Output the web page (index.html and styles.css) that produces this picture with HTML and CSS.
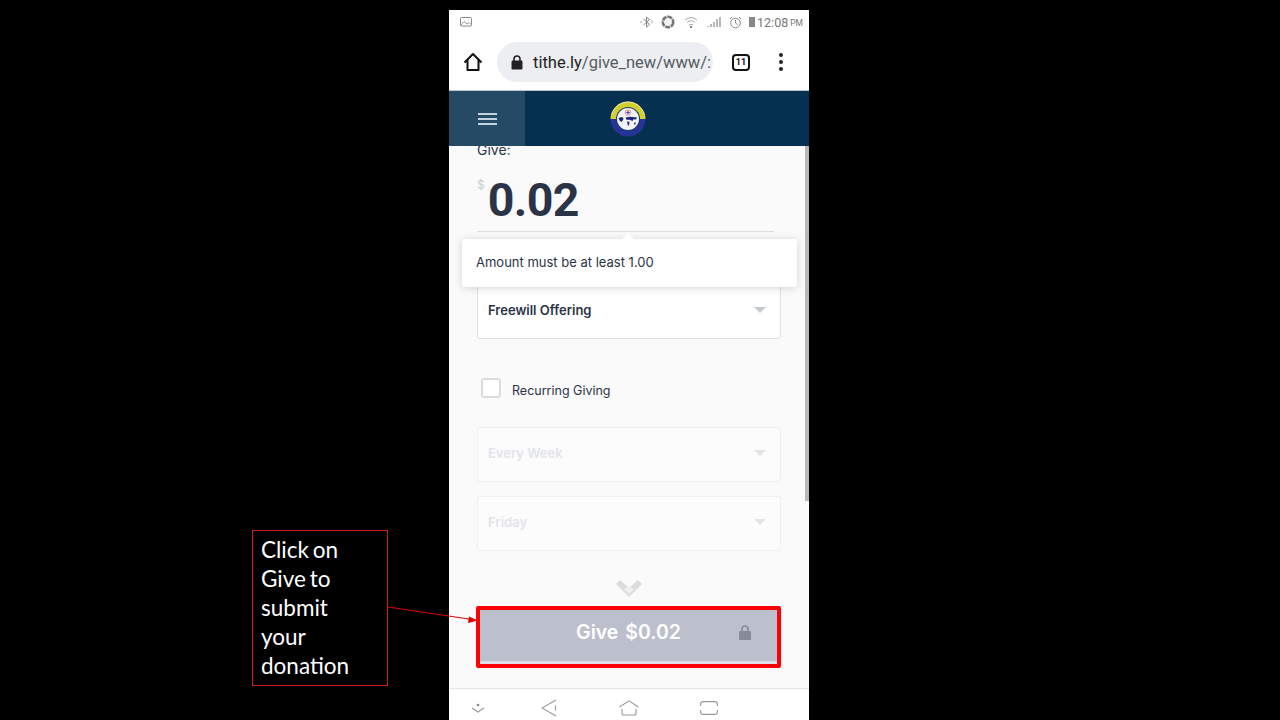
FILE: index.html
```html
<!DOCTYPE html>
<html lang="en">

<head>
  <meta charset="UTF-8">
  <meta name="viewport" content="width=device-width, initial-scale=1.0">
  <title>Give</title>
  <link rel="stylesheet" href="styles.css">
</head>

<body>
  <div class="slide">
    <div class="callout">Click on<br>Give to<br>submit<br>your<br>donation</div>
    <svg class="arrow" width="100" height="24" viewBox="0 0 100 24">
      <path d="M0 3 L84 15.5" stroke="#e00000" stroke-width="1" fill="none" />
      <path d="M90 16.5 L81 12.5 L80 19 Z" fill="#e00000" />
    </svg>

    <div class="phone">
      <div class="status-bar">
        <svg class="status-pic" width="12" height="10" viewBox="0 0 12 10">
          <rect x="0.5" y="0.5" width="11" height="8.5" rx="1" fill="none" stroke="#888" />
          <path d="M1 8 L4 4.5 L7 7 L9 5.5 L11 7.5" fill="none" stroke="#999" />
        </svg>
        <div class="status-right">
          <svg width="13" height="12" viewBox="0 0 13 12">
            <path d="M3.5 3 L9.5 8.5 L6.5 11 V1 L9.5 3.5 L3.5 9" fill="none" stroke="#888" />
            <path d="M1 5 V7 M12 4.5 V7.5" stroke="#aaa" />
          </svg>
          <svg class="gap-10" width="14" height="14" viewBox="0 0 14 14">
            <circle cx="7" cy="7" r="5.2" fill="none" stroke="#777" stroke-width="2.6" stroke-dasharray="5 0.8" />
            <circle cx="7" cy="7" r="3" fill="#f2f2f2" />
          </svg>
          <svg class="gap-11" width="14" height="14" viewBox="0 0 14 14">
            <path d="M1 5 Q7 0 13 5 M3 7.5 Q7 4 11 7.5 M5 10 Q7 8.5 9 10" fill="none" stroke="#aaa" />
            <rect x="6" y="11" width="2" height="2" fill="#888" />
          </svg>
          <svg class="gap-11" width="14" height="12" viewBox="0 0 14 12">
            <path d="M1 10 V11 M4 8 V11 M7 6 V11 M10 3 V11 M13 1 V11" stroke="#888" stroke-width="1.2" />
          </svg>
          <svg class="gap-10" width="13" height="13" viewBox="0 0 13 13">
            <circle cx="6.5" cy="7" r="4.8" fill="none" stroke="#888" />
            <path d="M6.5 4 V7 L8.5 8.5 M1 3 L3 1 M12 3 L10 1" fill="none" stroke="#888" />
          </svg>
          <span class="battery"></span>
          <span class="clock">12:08</span>
          <span class="ampm">PM</span>
        </div>
      </div>

      <div class="toolbar">
        <svg class="home-icon" width="20" height="20" viewBox="0 0 20 20">
          <path d="M1.5 10.5 L10 2 L18.5 10.5 M4.5 8 V18 H15.5 V8" fill="none" stroke="#111" stroke-width="2" stroke-linejoin="round" />
        </svg>
        <div class="url-box">
          <svg width="12" height="15" viewBox="0 0 12 15">
            <path d="M3 6 V4 A3 3 0 0 1 9 4 V6" fill="none" stroke="#222" stroke-width="1.6" />
            <rect x="0.5" y="5.5" width="11" height="9" rx="1.2" fill="#222" />
          </svg>
          <span class="url"><span class="url-host">tithe.ly</span>/give_new/www/:</span>
        </div>
        <span class="tab-count">11</span>
        <span class="menu-dots"><i></i><i></i><i></i></span>
      </div>

      <div class="app-header">
        <div class="burger"><i></i><i></i><i></i></div>
        <div class="logo-wrap">
          <svg width="36" height="37" viewBox="0 0 36 37">
            <circle cx="18" cy="19" r="17.5" fill="#26349a" />
            <path d="M0.5 19 A17.5 17.5 0 0 1 35.5 19 H29 A11 11 0 0 0 7 19 Z" fill="#d2ce2c" />
            <path d="M1.5 15 A17 17 0 0 1 34.5 15" fill="none" stroke="#e8e8d8" stroke-width="0.8" />
            <circle cx="18" cy="19" r="12" fill="#173a63" />
            <circle cx="18" cy="19" r="11" fill="#f2f3f8" />
            <circle cx="18" cy="12.5" r="2.8" fill="#f6dfe2" stroke="#c4505e" stroke-width="0.5" />
            <path d="M18 10.6 V14.4 M16.2 12.5 H19.8" stroke="#26349a" stroke-width="0.8" />
            <path d="M8.5 18 L11.5 17 L13.5 18 L13 20 L11.5 22 L9.5 20.5 Z M15.5 17.5 L20 16.8 L27 17.5 L26 19.5 L23.5 19.2 L22.5 21 L19.5 19.8 L16.5 19.8 Z M17 21.5 L19.5 21.8 L19 25.5 L17.8 25.2 Z M24 22.5 L26 22.8 L25.2 24.5 L24 24.2 Z" fill="#1c2877" />
          </svg>
        </div>
      </div>

      <div class="content">
        <div class="form">
          <div class="give-label">Give:</div>
          <div class="amount-row">
            <span class="currency">$</span>
            <span class="amount">0.02</span>
          </div>

          <div class="select select-first">
            <span>Freewill Offering</span>
            <i class="caret"></i>
          </div>

          <label class="recurring">
            <span class="checkbox"></span>
            <span>Recurring Giving</span>
          </label>

          <div class="select select-off">
            <span>Every Week</span>
            <i class="caret"></i>
          </div>
          <div class="select select-off select-next">
            <span>Friday</span>
            <i class="caret"></i>
          </div>

          <svg class="more" width="26" height="18" viewBox="0 0 26 18">
            <path d="M0 4 L4 0 L13 8 L22 0 L26 4 L13 17 Z" fill="#dcdcdc" />
            <path d="M8 9 L13 6 L18 9 L13 14 Z" fill="#efefef" />
          </svg>

          <button class="give-btn">
            <span>Give $0.02</span>
            <svg class="btn-lock" width="12" height="15" viewBox="0 0 12 15">
              <path d="M3 6.5 V4 A3 3 0 0 1 9 4 V6.5" fill="none" stroke="#878b99" stroke-width="1.6" />
              <rect y="6" width="12" height="9" rx="1.2" fill="#878b99" />
            </svg>
          </button>
        </div>

        <div class="tooltip">Amount must be at least 1.00</div>
        <div class="scrollbar"></div>
      </div>

      <div class="nav-bar">
        <svg width="16" height="12" viewBox="0 0 16 12">
          <circle cx="8" cy="3" r="1.3" fill="#888" />
          <path d="M2 6 L8 10 L14 6" fill="none" stroke="#999" stroke-width="1.1" />
        </svg>
        <svg width="16" height="18" viewBox="0 0 16 18">
          <path d="M15 1 L1 9 L15 17 M14.5 6.5 V11.5" fill="none" stroke="#999" stroke-width="1.1" />
        </svg>
        <svg width="20" height="16" viewBox="0 0 20 16">
          <path d="M0.5 7 L10 0.8 L19.5 7 M3 9 V13 Q3 15 5 15 H15 Q17 15 17 13 V9" fill="none" stroke="#999" stroke-width="1.1" />
        </svg>
        <svg width="18" height="14" viewBox="0 0 18 14">
          <path d="M0.6 5 V3 Q0.6 0.6 3 0.6 H15 Q17.4 0.6 17.4 3 V5 M0.6 9 V11 Q0.6 13.4 3 13.4 H15 Q17.4 13.4 17.4 11 V9" fill="none" stroke="#999" stroke-width="1.1" />
        </svg>
      </div>
    </div>
  </div>
</body>

</html>
```

FILE: styles.css
```css
* {
  box-sizing: border-box;
}

html,
body {
  margin: 0;
  padding: 0;
  background-color: #000;
}

body {
  font-family: Inter, Arial, sans-serif;
  color: #2b3447;
}

.slide {
  position: relative;
  width: 1280px;
  height: 720px;
  overflow: hidden;
  padding: 10px 0 0 449px;
}

/* annotation drawn on top of the screenshot */
.callout {
  position: absolute;
  left: 252px;
  top: 530px;
  width: 136px;
  height: 156px;
  border: 1px solid #d01c1c;
  padding: 4px 8px;
  font-family: Lato, sans-serif;
  font-size: 22.5px;
  line-height: 29px;
  word-spacing: -2px;
  color: #fff;
}

.arrow {
  position: absolute;
  left: 388px;
  top: 604px;
  z-index: 5;
}

.phone {
  width: 360px;
  height: 710px;
  background: #fff;
  display: flex;
  flex-direction: column;
}

/* status bar */
.status-bar {
  height: 26px;
  display: flex;
  align-items: center;
  justify-content: space-between;
  padding: 0 6px 2px 11px;
  flex-shrink: 0;
}

.status-right {
  display: flex;
  align-items: center;
}

.gap-10 {
  margin-left: 8px;
}

.gap-11 {
  margin-left: 9px;
}

.battery {
  width: 6px;
  height: 10px;
  margin-left: 7px;
  background: #888;
}

.clock {
  font-family: Roboto, sans-serif;
  font-size: 12.5px;
  color: #777;
  margin-left: 2px;
}

.ampm {
  font-family: Roboto, sans-serif;
  font-size: 8.5px;
  color: #777;
  margin: 2px 0 0 2px;
}

/* browser toolbar */
.toolbar {
  height: 55px;
  display: flex;
  align-items: center;
  padding: 0 0 2px 14px;
  border-bottom: 1px solid #b9c3c9;
  flex-shrink: 0;
}

.url-box {
  width: 216px;
  height: 40px;
  margin-left: 14px;
  padding-left: 14px;
  border-radius: 20px;
  background: #eceef1;
  display: flex;
  align-items: center;
  gap: 10px;
  overflow: hidden;
}

.url {
  font-family: Roboto, sans-serif;
  font-size: 16.5px;
  color: #555b63;
  white-space: nowrap;
}

.url-host {
  color: #222;
}

.tab-count {
  width: 18px;
  height: 17px;
  margin-left: 19px;
  border: 2px solid #111;
  border-radius: 4px;
  font-family: Roboto, sans-serif;
  font-size: 9px;
  font-weight: 700;
  line-height: 13px;
  text-align: center;
  color: #111;
}

.menu-dots {
  display: flex;
  flex-direction: column;
  gap: 3px;
  margin-left: 29px;
}

.menu-dots i {
  width: 4px;
  height: 4px;
  border-radius: 50%;
  background: #222;
}

/* site header */
.app-header {
  height: 55px;
  background: #06304f;
  display: flex;
  flex-shrink: 0;
}

.burger {
  width: 76px;
  background: #244a66;
  display: flex;
  flex-direction: column;
  align-items: center;
  justify-content: center;
  gap: 3px;
}

.burger i {
  width: 19px;
  height: 2px;
  background: #c3d2dc;
}

.logo-wrap {
  width: 206px;
  padding-bottom: 1px;
  display: flex;
  align-items: center;
  justify-content: center;
}

/* form area */
.content {
  position: relative;
  flex: 1;
  background: #fafafa;
  overflow: hidden;
}

.form {
  padding: 0 28px;
}

.give-label {
  margin-top: -5px;
  font-size: 14px;
  line-height: 18px;
}

.amount-row {
  height: 73px;
  width: 297px;
  display: flex;
  border-bottom: 1px solid #dcdde0;
}

.currency {
  margin-top: 19px;
  font-size: 12px;
  line-height: 14px;
  color: #c9cbd0;
}

.amount {
  margin: 16px 0 0 3px;
  font-family: Roboto, sans-serif;
  font-size: 46.5px;
  font-weight: 700;
  line-height: 50px;
  letter-spacing: -0.6px;
}

.select {
  width: 304px;
  height: 55px;
  padding: 0 14px 3px 10px;
  background: #fff;
  border: 1px solid #dfe0e3;
  border-radius: 3px;
  display: flex;
  align-items: center;
  justify-content: space-between;
  font-size: 13px;
  font-weight: 600;
}

.select-first {
  margin-top: 52px;
}

.select-off {
  background: #fcfcfc;
  border-color: #f0f0f2;
  color: #e2e4e9;
}

.select-next {
  margin-top: 14px;
}

.caret {
  width: 0;
  height: 0;
  border-left: 6px solid transparent;
  border-right: 6px solid transparent;
  border-top: 6px solid #c4cacd;
}

.select-off .caret {
  border-top-color: #e2e4e8;
}

.recurring {
  height: 88px;
  padding: 39px 0 0 4px;
  display: flex;
  gap: 11px;
  font-size: 12.5px;
}

.recurring span:last-child {
  margin-top: 5px;
}

.checkbox {
  width: 20px;
  height: 20px;
  background: #fff;
  border: 2px solid #dcdcdc;
  border-radius: 3px;
}

.more {
  display: block;
  margin: 29px auto 0;
}

.give-btn {
  display: block;
  position: relative;
  width: 305px;
  height: 62px;
  margin: 8px 0 0 -1px;
  padding: 0 0 11px;
  background: #bcc0cc;
  border: 4px solid #fb0007;
  border-radius: 2px;
  box-shadow: inset 0 -3px 0 #dcdee3;
  font-family: Inter, Arial, sans-serif;
  font-size: 19.5px;
  font-weight: 600;
  word-spacing: 2px;
  color: #fff;
}

.btn-lock {
  position: absolute;
  right: 26px;
  top: 15px;
}

/* validation popup */
.tooltip {
  position: absolute;
  left: 13px;
  top: 93px;
  width: 335px;
  height: 48px;
  padding-left: 14px;
  background: #fff;
  border-radius: 3px;
  box-shadow: 0 1px 8px rgba(0, 0, 0, 0.16);
  font-size: 13px;
  line-height: 47px;
}

.tooltip::before {
  content: "";
  position: absolute;
  left: 160px;
  top: -6px;
  border-left: 6px solid transparent;
  border-right: 6px solid transparent;
  border-bottom: 6px solid #fff;
}

.scrollbar {
  position: absolute;
  right: 0;
  top: 0;
  width: 4px;
  height: 355px;
  background: #b8b8b8;
}

/* android nav */
.nav-bar {
  height: 32px;
  background: #fff;
  border-top: 1px solid #e2e2e2;
  display: flex;
  align-items: center;
  padding: 6px 0 0 21px;
  flex-shrink: 0;
}

.nav-bar svg:nth-child(2) {
  margin-left: 55px;
}

.nav-bar svg:nth-child(3) {
  margin-left: 62px;
}

.nav-bar svg:nth-child(4) {
  margin-left: 61px;
}
```
